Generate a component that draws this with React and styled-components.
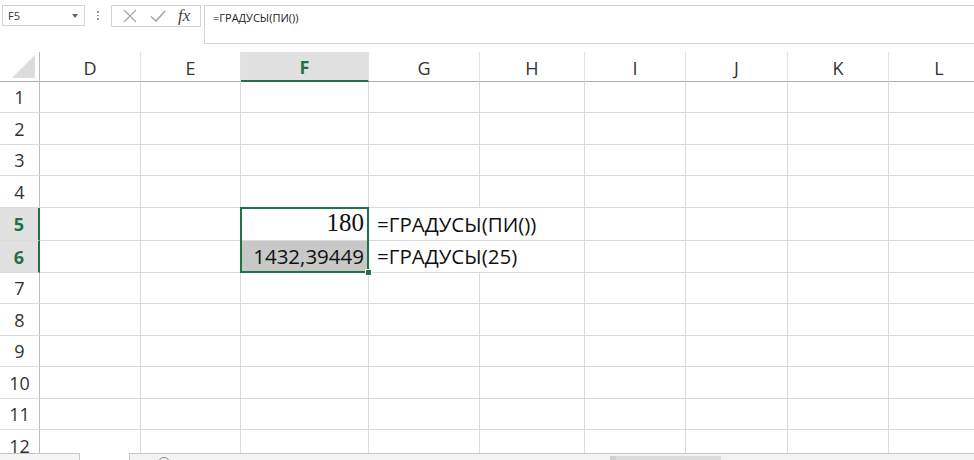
import React from "react";
import styled, { createGlobalStyle } from "styled-components";

const GREEN = "#217346";

const COLS = [
  { key: "D", width: 101 },
  { key: "E", width: 100 },
  { key: "F", width: 128 },
  { key: "G", width: 111 },
  { key: "H", width: 105 },
  { key: "I", width: 101 },
  { key: "J", width: 102 },
  { key: "K", width: 101 },
  { key: "L", width: 101 },
];

const ROW_HEIGHTS = [31, 32, 31, 32, 33, 32, 31, 32, 31, 32, 31, 32];

const CELLS = {
  F5: { text: "180", serif: true, align: "right" },
  F6: { text: "1432,39449", align: "right", shade: true },
  G5: { text: "=ГРАДУСЫ(ПИ())", overflow: true },
  G6: { text: "=ГРАДУСЫ(25)", overflow: true },
};

const GlobalStyle = createGlobalStyle`
  html, body {
    margin: 0;
    padding: 0;
    background: #ffffff;
    overflow: hidden;
  }
  body {
    font-family: "Open Sans", "Liberation Sans", sans-serif;
    color: #222;
  }
`;

const Window = styled.div`
  width: 974px;
  display: flex;
  flex-direction: column;
  overflow: hidden;
`;

const FormulaBar = styled.div`
  height: 44px;
  display: flex;
  align-items: flex-start;
  padding-top: 5px;
  box-sizing: border-box;
  margin-bottom: 8px;
`;

const NameBox = styled.div`
  width: 83px;
  height: 21px;
  margin-left: 2px;
  box-sizing: border-box;
  border: 1px solid #d4d4d4;
  display: flex;
  align-items: center;
  justify-content: space-between;
  padding: 0 6px 0 5px;
  font-size: 11px;
  color: #333;
`;

const Caret = styled.span`
  width: 0;
  height: 0;
  border-left: 3.5px solid transparent;
  border-right: 3.5px solid transparent;
  border-top: 4px solid #666;
`;

const Dots = styled.div`
  width: 26px;
  height: 21px;
  display: flex;
  flex-direction: column;
  align-items: center;
  justify-content: center;
  gap: 2px;
  span {
    width: 1.5px;
    height: 1.5px;
    background: #9a9a9a;
  }
`;

const ActionBox = styled.div`
  width: 90px;
  height: 22px;
  box-sizing: border-box;
  border: 1px solid #d4d4d4;
  display: flex;
  align-items: center;
  justify-content: space-around;
  padding: 0 4px;
`;

const Fx = styled.span`
  font-family: "Liberation Serif", "DejaVu Serif", serif;
  font-style: italic;
  font-size: 17px;
  color: #444;
  line-height: 1;
  margin-top: -2px;
`;

const FormulaInput = styled.div`
  flex: 1;
  height: 39px;
  margin-left: 3px;
  box-sizing: border-box;
  border: 1px solid #d4d4d4;
  border-right: none;
  padding: 4px 8px;
  font-size: 11px;
  color: #222;
`;

const Sheet = styled.div`
  height: 401px;
  flex-shrink: 0;
  display: grid;
  grid-template-columns: 40px ${COLS.map((c) => c.width + "px").join(" ")};
  grid-template-rows: 30px ${ROW_HEIGHTS.map((h) => h + "px").join(" ")};
  overflow: hidden;
`;

const Corner = styled.div`
  grid-row: 1;
  grid-column: 1;
  border-right: 1px solid #bcbcbc;
  border-bottom: 1px solid #ababab;
  display: flex;
  align-items: flex-end;
  justify-content: flex-end;
  padding: 0 4px 3px 0;
  box-sizing: border-box;
`;

const Triangle = styled.div`
  width: 0;
  height: 0;
  border-left: 23px solid transparent;
  border-bottom: 23px solid #dcdcdc;
`;

const ColHeader = styled.div`
  grid-row: 1;
  grid-column: ${(p) => p.$col};
  display: flex;
  align-items: center;
  justify-content: center;
  box-sizing: border-box;
  border-right: 1px solid #e3e3e3;
  border-bottom: ${(p) => (p.$active ? `2px solid ${GREEN}` : "1px solid #ababab")};
  background: ${(p) => (p.$active ? "#e1e1e1" : "#ffffff")};
  color: ${(p) => (p.$active ? GREEN : "#333")};
  font-weight: ${(p) => (p.$active ? 700 : 400)};
  font-size: 18px;
  padding-top: 2px;
`;

const RowHeader = styled.div`
  grid-row: ${(p) => p.$row};
  grid-column: 1;
  display: flex;
  align-items: center;
  justify-content: center;
  box-sizing: border-box;
  border-right: ${(p) => (p.$active ? `2px solid ${GREEN}` : "1px solid #bcbcbc")};
  border-bottom: 1px solid #dcdcdc;
  background: ${(p) => (p.$active ? "#e1e1e1" : "#ffffff")};
  color: ${(p) => (p.$active ? GREEN : "#333")};
  font-weight: ${(p) => (p.$active ? 700 : 400)};
  font-size: 18px;
`;

const Cell = styled.div`
  grid-row: ${(p) => p.$row};
  grid-column: ${(p) => p.$col};
  box-sizing: border-box;
  border-right: ${(p) => (p.$open ? "none" : "1px solid #dadada")};
  border-bottom: 1px solid #dadada;
  background: ${(p) => (p.$shade ? "#c8c8c8" : "transparent")};
  display: flex;
  align-items: flex-end;
  justify-content: ${(p) => (p.$align === "right" ? "flex-end" : "flex-start")};
  padding: 0 4px 2px 8px;
  white-space: nowrap;
  overflow: visible;
  font-family: ${(p) =>
    p.$serif ? `"Liberation Serif", "Times New Roman", serif` : `"Open Sans", "Liberation Sans", sans-serif`};
  font-size: ${(p) => (p.$serif ? "25px" : "20.5px")};
  line-height: 1.25;
  color: #111;
`;

const Selection = styled.div`
  grid-column: 4 / 5;
  grid-row: 6 / 8;
  margin: -1px 0 0 -1px;
  border: 2px solid ${GREEN};
  position: relative;
  pointer-events: none;
  z-index: 2;
`;

const FillHandle = styled.div`
  position: absolute;
  right: -5px;
  bottom: -5px;
  width: 5px;
  height: 5px;
  background: ${GREEN};
  border: 1px solid #fff;
`;

const Footer = styled.div`
  height: 26px;
  flex-shrink: 0;
  display: flex;
`;

const Tabs = styled.div`
  width: 80px;
  box-sizing: border-box;
  border-top: 1px solid #c6c6c6;
  border-right: 1px solid #c6c6c6;
  background: #f5f5f5;
`;

const Gap = styled.div`
  width: 49px;
`;

const ScrollArea = styled.div`
  flex: 1;
  box-sizing: border-box;
  border-top: 1px solid #c6c6c6;
  border-left: 1px solid #c6c6c6;
  background: #f3f3f3;
  display: flex;
  align-items: flex-start;
  padding: 2px 0 0 28px;
`;

const AddButton = styled.div`
  width: 10px;
  height: 10px;
  border-radius: 50%;
  border: 1px solid #8a8a8a;
  margin-top: 1px;
`;

const Thumb = styled.div`
  width: 105px;
  height: 14px;
  margin-left: 440px;
  background: #dcdcdc;
  border-left: 6px solid #cfcfcf;
`;

const XIcon = () => (
  <svg width="16" height="16" viewBox="0 0 16 16">
    <path d="M2 2 L14 14 M14 2 L2 14" stroke="#a8a8a8" strokeWidth="1.3" fill="none" />
  </svg>
);

const CheckIcon = () => (
  <svg width="18" height="16" viewBox="0 0 18 16">
    <path d="M2 8.5 L7 13 L16 3" stroke="#a8a8a8" strokeWidth="1.6" fill="none" />
  </svg>
);

const App = () => {
  const rows = ROW_HEIGHTS.map((_, i) => i + 1);

  return (
    <Window>
      <GlobalStyle />
      <FormulaBar>
        <NameBox>
          F5
          <Caret />
        </NameBox>
        <Dots>
          <span />
          <span />
          <span />
        </Dots>
        <ActionBox>
          <XIcon />
          <CheckIcon />
          <Fx>fx</Fx>
        </ActionBox>
        <FormulaInput>=ГРАДУСЫ(ПИ())</FormulaInput>
      </FormulaBar>

      <Sheet>
        <Corner>
          <Triangle />
        </Corner>
        {COLS.map((c, ci) => (
          <ColHeader key={c.key} $col={ci + 2} $active={c.key === "F"}>
            {c.key}
          </ColHeader>
        ))}
        {rows.map((r) => (
          <React.Fragment key={r}>
            <RowHeader $row={r + 1} $active={r === 5 || r === 6}>
              {r}
            </RowHeader>
            {COLS.map((c, ci) => {
              const cell = CELLS[c.key + r];
              return (
                <Cell
                  key={c.key}
                  $row={r + 1}
                  $col={ci + 2}
                  $open={cell && cell.overflow}
                  $shade={cell && cell.shade}
                  $serif={cell && cell.serif}
                  $align={cell && cell.align}
                >
                  {cell ? cell.text : null}
                </Cell>
              );
            })}
          </React.Fragment>
        ))}
        <Selection>
          <FillHandle />
        </Selection>
      </Sheet>

      <Footer>
        <Tabs />
        <Gap />
        <ScrollArea>
          <AddButton />
          <Thumb />
        </ScrollArea>
      </Footer>
    </Window>
  );
};

export default App;
